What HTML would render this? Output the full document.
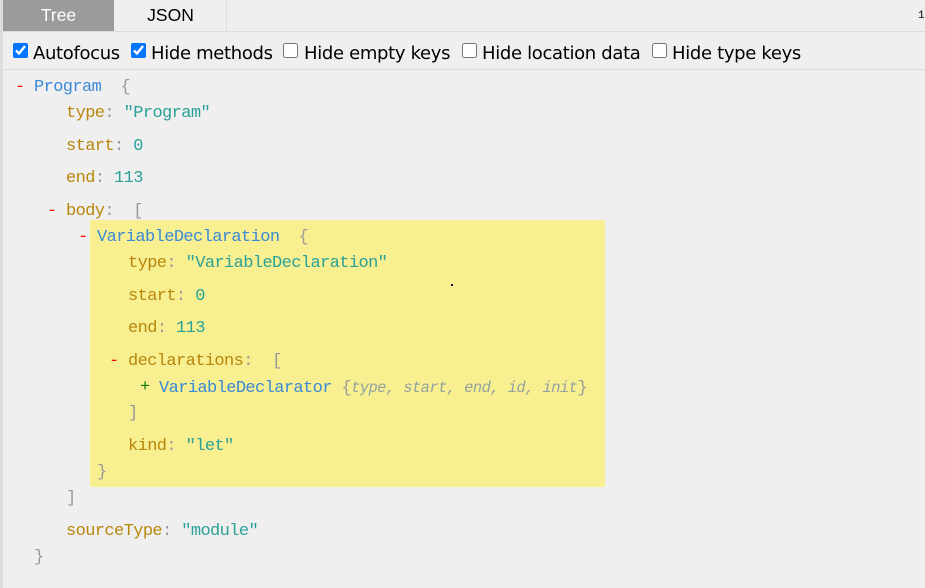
<!DOCTYPE html>
<html><head><meta charset="utf-8">
<style>
html,body{margin:0;padding:0;width:925px;height:588px;overflow:hidden;background:#efefef}
.a{position:absolute;white-space:pre}
.m{font:17px/20px "Liberation Mono",monospace;letter-spacing:-.6px;color:#9aa0a0;margin-top:1px}
.k{color:#b8860b}.c{color:#999}.v{color:#2aa198}.n{color:#3a8ad6}
.r{color:#f00}.g{color:#0a7a0a}.i{font-style:italic;color:#93a1a1;font-size:15.5px}
.l{font:18px/22px "DejaVu Sans",sans-serif;color:#000;letter-spacing:-.33px}
.t{font:17.5px/20px "Liberation Sans",sans-serif;text-align:center}
input{position:absolute;margin:0;width:15px;height:15px;accent-color:#0075ff}
</style></head><body>
<div class="a" style="left:0;top:0;width:3px;height:588px;background:#ddd"></div>
<div class="a t" style="left:3px;top:0;width:111px;height:31px;line-height:30px;background:#9b9b9b;color:#fff">Tree</div>
<div class="a t" style="left:115px;top:0;width:111px;height:31px;line-height:30px;color:#000">JSON</div>
<div class="a" style="left:226px;top:0;width:1px;height:31px;background:#ddd"></div>
<div class="a" style="left:918px;top:9px;font:11px/14px 'Liberation Mono',monospace;color:#000">1</div>
<div class="a" style="left:3px;top:31px;width:922px;height:1px;background:#ddd"></div>
<div class="a" style="left:3px;top:69px;width:922px;height:1px;background:#ddd"></div>

<input type="checkbox" checked style="left:13px;top:43px">
<div class="a l" style="left:33px;top:43px">Autofocus</div>
<input type="checkbox" checked style="left:131px;top:43px">
<div class="a l" style="left:151px;top:43px">Hide methods</div>
<input type="checkbox" style="left:283px;top:43px">
<div class="a l" style="left:304px;top:43px">Hide empty keys</div>
<input type="checkbox" style="left:462px;top:43px">
<div class="a l" style="left:482px;top:43px">Hide location data</div>
<input type="checkbox" style="left:652px;top:43px">
<div class="a l" style="left:672px;top:43px">Hide type keys</div>

<div class="a" style="left:90px;top:220px;width:515px;height:267px;background:#f7ef90;border-radius:2px"></div>
<div class="a" style="left:451px;top:284px;width:2px;height:2px;background:#113"></div>

<div class="a m r" style="left:15px;top:77px">-</div>
<div class="a m" style="left:34px;top:77px"><span class="n">Program</span>  <span class="c">{</span></div>
<div class="a m" style="left:66px;top:103px"><span class="k">type</span><span class="c">:</span> <span class="v">"Program"</span></div>
<div class="a m" style="left:66px;top:136px"><span class="k">start</span><span class="c">:</span> <span class="v">0</span></div>
<div class="a m" style="left:66px;top:168px"><span class="k">end</span><span class="c">:</span> <span class="v">113</span></div>
<div class="a m r" style="left:47px;top:201px">-</div>
<div class="a m" style="left:66px;top:201px"><span class="k">body</span><span class="c">:</span>  <span class="c">[</span></div>
<div class="a m r" style="left:78px;top:227px">-</div>
<div class="a m" style="left:97px;top:227px"><span class="n">VariableDeclaration</span>  <span class="c">{</span></div>
<div class="a m" style="left:128px;top:253px"><span class="k">type</span><span class="c">:</span> <span class="v">"VariableDeclaration"</span></div>
<div class="a m" style="left:128px;top:286px"><span class="k">start</span><span class="c">:</span> <span class="v">0</span></div>
<div class="a m" style="left:128px;top:318px"><span class="k">end</span><span class="c">:</span> <span class="v">113</span></div>
<div class="a m r" style="left:109px;top:351px">-</div>
<div class="a m" style="left:128px;top:351px"><span class="k">declarations</span><span class="c">:</span>  <span class="c">[</span></div>
<div class="a m g" style="left:140px;top:377px">+</div>
<div class="a m" style="left:159px;top:377px"><span class="n">VariableDeclarator</span> <span class="c">{</span><span class="i">type, start, end, id, init</span><span class="c">}</span></div>
<div class="a m c" style="left:128px;top:403px">]</div>
<div class="a m" style="left:128px;top:436px"><span class="k">kind</span><span class="c">:</span> <span class="v">"let"</span></div>
<div class="a m c" style="left:97px;top:462px">}</div>
<div class="a m c" style="left:66px;top:488px">]</div>
<div class="a m" style="left:66px;top:521px"><span class="k">sourceType</span><span class="c">:</span> <span class="v">"module"</span></div>
<div class="a m c" style="left:34px;top:547px">}</div>
</body></html>
